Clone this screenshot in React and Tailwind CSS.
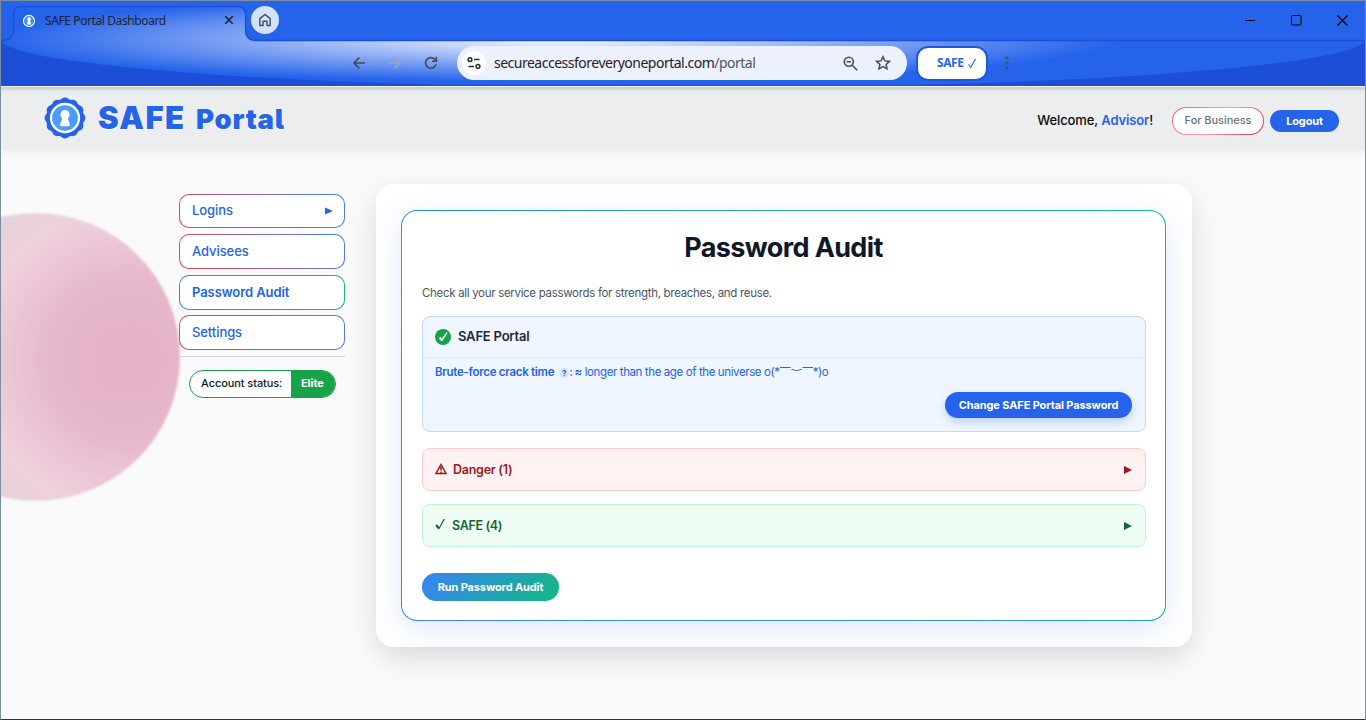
import React from "react";

function ShieldLogo({ className }) {
  const bumps = Array.from({ length: 12 }, (_, i) => {
    const a = (i * Math.PI) / 6;
    return [22 + 15.4 * Math.cos(a), 22 + 15.4 * Math.sin(a)];
  });
  return (
    <svg viewBox="0 0 44 44" className={className}>
      <circle cx="22" cy="22" r="19" fill="#2563eb" />
      {bumps.map(([x, y], i) => (
        <circle key={i} cx={x} cy={y} r="5" fill="#2563eb" />
      ))}
      <circle cx="22" cy="22" r="14" fill="#4a9dff" stroke="#fff" strokeWidth="2.3" />
      <path d="M22 14a4.600 4.600 0 0 1 2.700 8.300l2.200 5.900q.5 2-1.400 2h-7q-1.900 0-1.400-2l2.200-5.900A4.600 4.600 0 0 1 22 14z" fill="#fff" />
    </svg>
  );
}

function ChromeBackdrop() {
  return (
    <svg className="absolute inset-0 h-[85px] w-full" viewBox="0 0 1364 85" preserveAspectRatio="none">
      <defs>
        <radialGradient id="glow" gradientUnits="userSpaceOnUse" cx="0" cy="0" r="1" gradientTransform="translate(557 38) scale(560 43)">
          <stop offset="0" stopColor="#fff" />
          <stop offset="0.2" stopColor="#fff" stopOpacity="0.78" />
          <stop offset="1" stopColor="#fff" stopOpacity="0" />
        </radialGradient>
        <clipPath id="bar"><rect x="0" y="40" width="1364" height="44" /></clipPath>
      </defs>
      <rect width="1364" height="40" fill="#2563eb" />
      <rect y="39" width="1364" height="46" fill="#1d4ed8" />
      <g clipPath="url(#bar)">
        <ellipse cx="682" cy="38" rx="682" ry="49" fill="#2563eb" />
      </g>
      <path d="M1 40Q12.500 38 12.500 29V13.500Q12.500 5.500 20.500 5.500H236.500Q244.500 5.500 244.500 13.500V29Q244.500 39.500 255 40V41H2z" fill="#2563eb" />
      <path d="M1 40Q12.500 38 12.500 29V13.500Q12.500 5.500 20.500 5.500H236.500Q244.500 5.500 244.500 13.500V29Q244.500 39.500 255 40H1364V84H0V40z" fill="url(#glow)" />
      <path d="M0 39.500H3Q12.500 38 12.500 29V13.500Q12.500 5.500 20.500 5.500H236.500Q244.500 5.500 244.500 13.500V29Q244.500 39.500 255 39.500H1364" fill="none" stroke="#1d4ed8" strokeWidth="1.3" />
    </svg>
  );
}

function Browser() {
  return (
    <div className="relative h-[85px] bg-[#1d4ed8] font-['Noto_Sans',sans-serif]">
      <ChromeBackdrop />
      <div className="relative flex h-10 items-center">
        <div className="flex w-[250px] items-center pl-[21px]">
          <svg viewBox="0 0 14 14" className="size-3.5">
            <circle cx="7" cy="7" r="5.600" fill="#3b92fb" stroke="#fff" strokeWidth="1.1" />
            <path d="M7 3.200a1.900 1.900 0 0 1 1.100 3.400L9 10.500H5l.900-3.900A1.900 1.900 0 0 1 7 3.200z" fill="#fff" />
          </svg>
          <span className="ml-[9px] whitespace-nowrap text-[12px] tracking-[-0.4px] text-[#1c2333]">SAFE Portal Dashboard</span>
          <svg viewBox="0 0 10 10" className="absolute left-[223px] size-[10px] -translate-y-px" stroke="#1f2430" strokeWidth="1.600"><path d="M1.300 1.300l7.400 7.400M8.700 1.300l-7.400 7.400" /></svg>
        </div>
        <div className="flex size-7 -translate-y-px items-center justify-center rounded-full bg-[#d3e1fc]">
          <svg viewBox="0 0 14 14" className="size-3.5" fill="none" stroke="#424a57" strokeWidth="1.400"><path d="M1.800 5.600L7 1.500l5.200 4.100v6.900H9V8.200H5v4.300H1.800z" strokeLinejoin="round" /></svg>
        </div>
        <div className="ml-auto flex items-center gap-[35px] pr-[17px] pb-px">
          <svg viewBox="0 0 11 11" className="size-[11px]"><path d="M0 5.500h10" stroke="#000" /></svg>
          <svg viewBox="0 0 11 11" className="size-[11px]"><rect x=".5" y=".5" width="9.500" height="9.500" rx="1.200" fill="none" stroke="#000" /></svg>
          <svg viewBox="0 0 11 11" className="size-[11px]"><path d="M.5.5l10 10M10.500.5l-10 10" stroke="#000" strokeWidth="1.100" /></svg>
        </div>
      </div>
      <div className="relative flex h-[44px] items-center pl-[352px]">
        <div className="flex items-center gap-6">
          <svg viewBox="0 0 12 12" className="size-3" fill="none" stroke="#454b55" strokeWidth="1.600"><path d="M12 6H1M6.300.6L.9 6l5.400 5.400" /></svg>
          <svg viewBox="0 0 12 12" className="size-3" fill="none" stroke="#99a5bb" strokeWidth="1.600"><path d="M0 6h11M5.700.6L11.100 6l-5.400 5.400" /></svg>
          <svg viewBox="0 0 14 14" className="-ml-px size-3.5" fill="none" stroke="#454b55" strokeWidth="1.600"><path d="M12 8.300A5.300 5.300 0 1 1 10.700 3.200L12 4.500M12.300.8v4.400H8" /></svg>
        </div>
        <div className="ml-[19px] flex h-[34px] w-[450px] items-center rounded-full bg-[#ecf1fb] pl-[5px]">
          <div className="flex size-6 items-center justify-center rounded-full bg-white">
            <svg viewBox="0 0 14 12" className="h-3 w-3.5" fill="none" stroke="#252a33" strokeWidth="1.500"><circle cx="3" cy="2.600" r="1.900" /><path d="M7 2.600h5.500M1.500 9.400H7" /><circle cx="11" cy="9.400" r="1.900" /></svg>
          </div>
          <span className="ml-2 w-[340px] whitespace-nowrap pb-px text-[14px] tracking-[-0.5px] text-[#1f2228]">secureaccessforeveryoneportal.com<span className="text-[#50555e]">/portal</span></span>
          <svg viewBox="0 0 15 15" className="ml-[9px] size-[15px] shrink-0" fill="none" stroke="#454b55" strokeWidth="1.600"><circle cx="5.800" cy="5.800" r="4.500" /><path d="M9.200 9.200l5 5M3.600 5.800h4.400" /></svg>
          <svg viewBox="0 0 16 16" className="ml-[17px] size-4 shrink-0" fill="none" stroke="#454b55" strokeWidth="1.500"><path d="M8 1.800l1.900 4.100 4.500.5-3.300 3 .9 4.400L8 11.600l-4 2.200.9-4.400-3.300-3 4.500-.5z" /></svg>
        </div>
        <div className="ml-[9px] flex h-[35px] w-[72px] items-center rounded-[12px] border-2 border-[#1d57dd] bg-white pl-[19px] text-[12px] font-bold tracking-[-0.400px] text-[#2563eb]">
          SAFE
          <svg viewBox="0 0 8 11" className="ml-1 h-[11px] w-2" fill="none" stroke="#2563eb" strokeWidth="1.100"><path d="M.5 6.500l2.300 3L7.500.8" /></svg>
        </div>
        <svg viewBox="0 0 4 14" className="ml-[17px] h-3.5 w-1" fill="#454f68"><circle cx="2" cy="2" r="1.600" /><circle cx="2" cy="7" r="1.600" /><circle cx="2" cy="12" r="1.600" /></svg>
      </div>
    </div>
  );
}

function SiteHeader() {
  return (
    <header className="relative flex h-[64px] items-center bg-[linear-gradient(#f4f4f2_0,#f4f4f2_1px,#cccdcf_1px,#d4d5d7_3px,#e8e9ea_5px,#ecedee_8px,#ecedee_100%)] pl-[42px] pr-[26px] shadow-[0_2px_6px_rgba(0,0,0,0.060)]">
      <ShieldLogo className="size-[44px]" />
      <h1 className="ml-[11px] flex items-baseline whitespace-nowrap pt-px font-[Inter,sans-serif] font-black text-[#2563eb] [font-feature-settings:'cv05'] [text-shadow:0_1px_1px_#fff]">
        <span className="text-[31px] leading-[40px] tracking-[1.500px]">SAFE</span>
        <span className="ml-[10.500px] text-[27.500px] leading-[40px] tracking-[0.750px]">Portal</span>
      </h1>
      <div className="ml-auto flex items-center pt-[5px] font-[Inter,sans-serif]">
        <span className="whitespace-nowrap pt-px text-[13px] font-medium tracking-[-0.120px] text-[#0b0b0f]">Welcome, <b className="font-semibold text-[#2563eb]">Advisor</b>!</span>
        <button className="ml-[19px] h-7 w-[92px] whitespace-nowrap rounded-full border border-transparent pb-px text-[11px] font-medium tracking-[-0.050px] text-[#6b7280] [background:linear-gradient(#fff,#fff)_padding-box,linear-gradient(135deg,#f4566f,#fda4af_50%,#e11d48)_border-box]">For Business</button>
        <button className="ml-[6px] h-[22px] w-[69px] rounded-full bg-[#2563eb] pt-px text-[11px] font-bold tracking-[-0.150px] text-white">Logout</button>
      </div>
    </header>
  );
}

const navItems = [
  { label: "Logins", arrow: true, box: "h-[34px] pb-px" },
  { label: "Advisees", box: "mt-[6px] h-[35px]" },
  { label: "Password Audit", active: true, box: "mt-[6px] h-[35px]" },
  { label: "Settings", box: "mt-[5px] h-[35px]" },
];

function Sidebar() {
  return (
    <aside className="relative mt-[44px] w-[166px] font-[Inter,sans-serif]">
      <nav className="flex flex-col">
        {navItems.map((n) => (
          <a
            key={n.label}
            className={
              "flex items-center justify-between rounded-[10px] border border-transparent pl-3 pr-[11px] text-[13px] tracking-[-0.080px] text-[#2563eb] " +
              n.box +
              (n.active
                ? " font-semibold [background:linear-gradient(#fff,#fff)_padding-box,linear-gradient(45deg,#3b82f6,#10b981)_border-box]"
                : " font-medium [background:linear-gradient(#fff,#fff)_padding-box,linear-gradient(45deg,#ef4444,#3b82f6)_border-box]")
            }
          >
            {n.label}
            {n.arrow && <svg viewBox="0 0 8 8" className="mt-px h-2 w-[8px]"><path d="M0 .5L8 4 0 7.500z" fill="#2563eb" /></svg>}
          </a>
        ))}
      </nav>
      <div className="mt-[6px] border-t border-[#cbd5e1]" />
      <div className="ml-[10px] mt-[13px] flex h-7 w-[147px] overflow-hidden rounded-full border border-[#16a34a] bg-white text-[11px]">
        <span className="flex w-[101px] items-center whitespace-nowrap pl-[11px] pb-px font-medium tracking-[-0.080px] text-[#111827]">Account status:</span>
        <span className="flex flex-1 items-center bg-[#16a34a] pb-px pl-[10px] font-bold tracking-[-0.080px] text-white">Elite</span>
      </div>
    </aside>
  );
}

function Arrow({ color }) {
  return <svg viewBox="0 0 8 8" className="h-2 w-[8px]" style={{ fill: color }}><path d="M0 0L8 4 0 8z" /></svg>;
}

function AuditCard() {
  return (
    <main className="relative mt-[34px] ml-[31px] h-[463px] w-[816px] rounded-[18px] shadow-[0_10px_28px_rgba(0,0,0,0.130)]">
      <div className="h-full overflow-hidden rounded-[18px] bg-white pl-[25px] pt-[26px]">
        <section className="h-[411px] w-[765px] rounded-[16px] border border-transparent px-5 font-[Inter,sans-serif] shadow-[0_8px_30px_rgba(37,99,235,0.150)] [background:linear-gradient(#fff,#fff)_padding-box,linear-gradient(45deg,#3b82f6,#10b981)_border-box]">
          <h2 className="mt-[19px] text-center text-[27px] font-bold leading-9 tracking-[-0.620px] text-[#0f172a]">Password Audit</h2>
          <p className="mt-[18px] whitespace-nowrap text-[11.500px] leading-[18px] tracking-[-0.310px] text-[#4b5563]">Check all your service passwords for strength, breaches, and reuse.</p>
          <div className="mt-[14px] h-[116px] w-[724px] rounded-[8px] border border-[#bfdbfe] bg-[#eff6ff]">
            <div className="flex h-[41px] items-center border-b border-[#e0e5eb] pl-3">
              <svg viewBox="0 0 16 16" className="size-4"><circle cx="8" cy="8" r="8" fill="#16a34a" /><path d="M4.700 8.500L6.900 11.400" fill="none" stroke="#fff" strokeWidth="2.200" /><path d="M6.600 11.600L12 3.600" fill="none" stroke="#fff" strokeWidth="1.500" /></svg>
              <span className="ml-[7px] text-[13px] font-semibold tracking-[-0.200px] text-[#1f2937]">SAFE Portal</span>
            </div>
            <div className="flex h-[29px] items-center whitespace-nowrap pl-3 text-[11.500px] tracking-[-0.390px] text-[#2563eb]">
              <b className="font-semibold tracking-[-0.280px]">Brute-force crack time</b>
              <span className="ml-[5px] flex size-[10px] items-center justify-center rounded-full bg-[#d3e3fd] text-[8px] font-bold tracking-normal">?</span>
              <b className="font-semibold tracking-[-0.600px]">: ≈</b>
              <span className="ml-[3px]">longer than the age of the universe o(*</span>
              <svg viewBox="0 0 33 8" className="h-2 w-[33px] -translate-y-[4px]" fill="none" stroke="#2563eb" strokeWidth="1"><path d="M0 2.500h10.500M11.500 4.500h1.500q1 1 3.500 1t3.500-1h1.500M22.500 2.500h10.500" /></svg>
              <span>*)o</span>
            </div>
            <div className="flex justify-end pr-[13px] pt-[5px]">
              <button className="h-[26px] w-[187px] whitespace-nowrap rounded-full bg-[#2563eb] text-[11px] font-bold tracking-[-0.120px] text-white shadow-[0_4px_9px_rgba(37,99,235,0.250)]">Change SAFE Portal Password</button>
            </div>
          </div>
          <div className="mt-4 flex h-[43px] w-[724px] items-center rounded-[8px] border border-[#fecaca] bg-[#fef2f2] pl-3 pr-[13px] text-[12.500px] font-semibold tracking-[-0.260px] text-[#991b1b]">
            <svg viewBox="0 0 12 12" className="-mt-[2px] size-3" fill="none" stroke="#991b1b" strokeWidth="1.500"><path d="M6 1.500L11 10.500H1zM6 4v3.600M6 8.500v1.200" /></svg>
            <span className="ml-[6px] mr-auto pt-px">Danger (1)</span>
            <Arrow color="#991b1b" />
          </div>
          <div className="mt-[13px] flex h-[43px] w-[724px] items-center rounded-[8px] border border-[#bbf7d0] bg-[#f0fdf4] pl-3 pr-[13px] text-[12.500px] font-semibold tracking-[-0.340px] text-[#166534]">
            <svg viewBox="0 0 11 12" className="-mt-[3px] h-3 w-[11px]" fill="none" stroke="#166534"><path d="M1.200 7l2.700 3.500" strokeWidth="2.200" /><path d="M3.700 11L9.300 1" strokeWidth="1.300" /></svg>
            <span className="ml-[6px] mr-auto pt-px">SAFE (4)</span>
            <Arrow color="#166534" />
          </div>
          <button className="mt-[26px] h-7 w-[137px] whitespace-nowrap rounded-full bg-[linear-gradient(135deg,#3b82f6,#10b981)] text-[11px] font-bold tracking-[-0.130px] text-white">Run Password Audit</button>
        </section>
      </div>
    </main>
  );
}

export default function App() {
  return (
    <div className="relative flex h-[720px] w-[1366px] flex-col overflow-hidden border border-[#7c8da1] border-b-[#30304a] bg-[#fafafa]">
      <Browser />
      <SiteHeader />
      <div className="relative flex flex-1 pl-[178px]">
        <div className="absolute left-[-109px] top-[63px] size-[288px] rounded-full bg-[radial-gradient(circle_at_82%_51%,#e5b0c7_0,#e6b8cc_80px,#efd1de_150px,#e2d2da_200px)] blur-[1px]" />
        <Sidebar />
        <AuditCard />
      </div>
    </div>
  );
}
